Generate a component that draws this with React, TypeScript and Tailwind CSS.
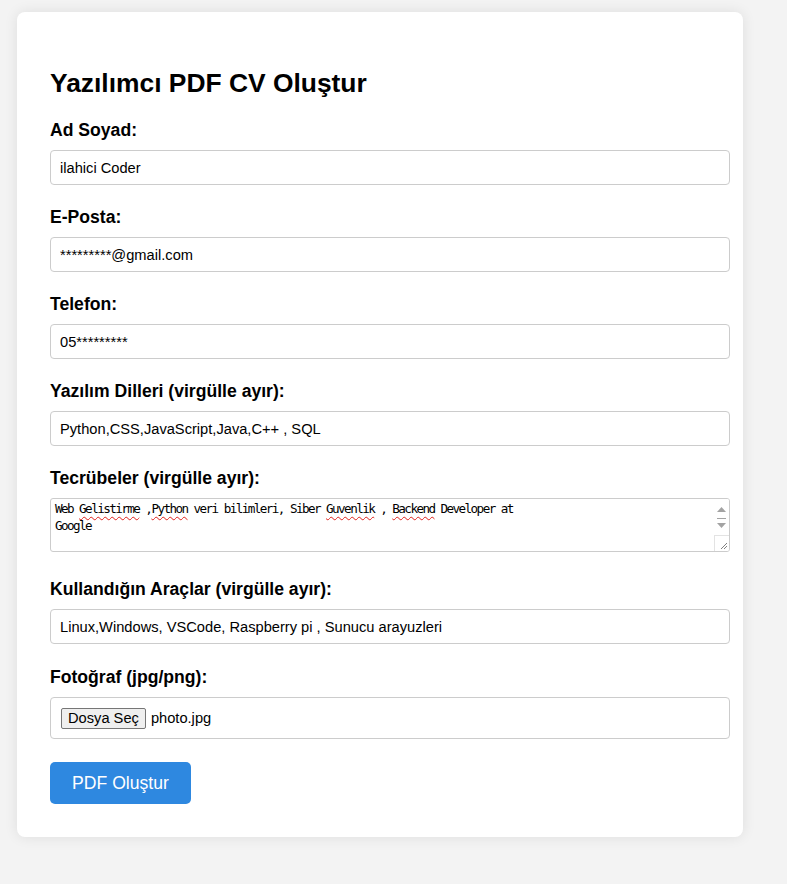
import React, { useState } from "react";

const fieldInput =
  "block w-[680px] h-[35px] px-[9px] border border-[#cccccc] rounded-[4px] bg-white text-[14.67px] text-black outline-none";
const labelCls = "block text-[17.6px] leading-[20px] font-bold text-black mb-[10px]";

function Squiggle({ children }: { children: React.ReactNode }) {
  return (
    <span className="underline decoration-wavy decoration-[#e0201a] decoration-1 underline-offset-[3px]">
      {children}
    </span>
  );
}

export default function App() {
  const [name, setName] = useState("ilahici Coder");
  const [email, setEmail] = useState("*********@gmail.com");
  const [phone, setPhone] = useState("05*********");
  const [langs, setLangs] = useState("Python,CSS,JavaScript,Java,C++ , SQL");
  const [tools, setTools] = useState("Linux,Windows, VSCode, Raspberry pi , Sunucu arayuzleri");

  return (
    <div
      className="min-h-screen bg-[#f3f3f3] pt-[12px] pl-[17px] pb-[48px]"
      style={{ fontFamily: '"Liberation Sans", Arial, sans-serif' }}
    >
      <div className="w-[726px] bg-white rounded-[8px] shadow-[0_0_14px_rgba(0,0,0,0.09)] px-[33px] pt-[56px] pb-[33px]">
        <h2 className="text-[26.4px] leading-[30px] font-bold text-black mb-[22px]">Yazılımcı PDF CV Oluştur</h2>

        <form onSubmit={(e) => e.preventDefault()}>
          <label htmlFor="ad" className={labelCls}>Ad Soyad:</label>
          <input id="ad" value={name} onChange={(e) => setName(e.target.value)} className={fieldInput} />

          <label htmlFor="mail" className={`${labelCls} mt-[22px]`}>E-Posta:</label>
          <input id="mail" value={email} onChange={(e) => setEmail(e.target.value)} className={fieldInput} />

          <label htmlFor="tel" className={`${labelCls} mt-[22px]`}>Telefon:</label>
          <input id="tel" value={phone} onChange={(e) => setPhone(e.target.value)} className={fieldInput} />

          <label htmlFor="dil" className={`${labelCls} mt-[22px]`}>Yazılım Dilleri (virgülle ayır):</label>
          <input id="dil" value={langs} onChange={(e) => setLangs(e.target.value)} className={fieldInput} />

          <label className={`${labelCls} mt-[22px]`}>Tecrübeler (virgülle ayır):</label>
          {/* textarea look-alike so the spellcheck squiggles show */}
          <div
            role="textbox"
            aria-multiline="true"
            className="flex w-[680px] h-[54px] mt-[1px] border border-[#cccccc] rounded-[3px] bg-white overflow-hidden"
          >
            <div
              className="flex-1 pl-[4px] pt-[2px] text-[12.6px] leading-[16.5px] tracking-[-1.56px] text-black whitespace-pre"
              style={{ fontFamily: '"DejaVu Sans Mono", "Liberation Mono", monospace' }}
            >
              Web <Squiggle>Gelistirme</Squiggle> ,<Squiggle>Python</Squiggle> veri bilimleri, Siber{" "}
              <Squiggle>Guvenlik</Squiggle> , <Squiggle>Backend</Squiggle> Developer at
              <br />
              Google
            </div>
            <div className="w-[15px] flex flex-col bg-white">
              <div className="flex flex-col items-center pt-[8px]">
                <svg width="9" height="5" viewBox="0 0 9 5"><path d="M4.5 0L9 5H0z" fill="#a3a3a3" /></svg>
                <div className="w-[9px] h-[1px] bg-[#a3a3a3] mt-[6px]" />
                <svg width="9" height="5" viewBox="0 0 9 5" className="mt-[4px]"><path d="M0 0h9L4.5 5z" fill="#a3a3a3" /></svg>
              </div>
              <div className="mt-auto h-[16px] border-t border-l border-[#e3e3e3] flex items-end justify-end">
                <svg width="8" height="8" viewBox="0 0 8 8" className="mb-[1px] mr-[1px]">
                  <path d="M7 1L1 7M7 4L4 7" stroke="#808080" strokeWidth="1" />
                </svg>
              </div>
            </div>
          </div>

          <label htmlFor="arac" className={`${labelCls} mt-[27px]`}>Kullandığın Araçlar (virgülle ayır):</label>
          <input id="arac" value={tools} onChange={(e) => setTools(e.target.value)} className={fieldInput} />

          <label className={`${labelCls} mt-[23px]`}>Fotoğraf (jpg/png):</label>
          <div className="flex items-center w-[680px] h-[42px] border border-[#cccccc] rounded-[4px] bg-white pl-[10px] text-[14.67px] text-black">
            <button
              type="button"
              className="h-[21px] px-[6px] bg-[#efefef] border border-[#767676] rounded-[2px] text-[14.67px] leading-[17px] text-black"
            >
              Dosya Seç
            </button>
            <span className="ml-[5px]">photo.jpg</span>
          </div>

          <button
            type="submit"
            className="mt-[23px] w-[141px] h-[42px] bg-[#2e88e0] rounded-[5px] text-white text-[17.6px]"
          >
            PDF Oluştur
          </button>
        </form>
      </div>
    </div>
  );
}
